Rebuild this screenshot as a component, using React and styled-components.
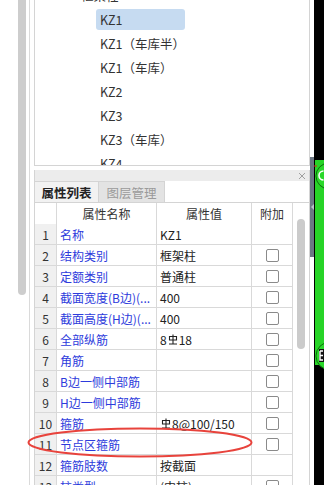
import React from "react";
import styled, { createGlobalStyle } from "styled-components";

const Global = createGlobalStyle`
  html, body { margin: 0; padding: 0; background: #fff; }
  body { font-family: "Noto Sans CJK SC", "Noto Sans", sans-serif; font-size: 12px; color: #333; }
  * { box-sizing: border-box; }
`;

const Page = styled.div`
  position: relative;
  display: flex;
  width: 324px;
  height: 485px;
  overflow: hidden;
  background: #fff;
`;

const LeftTrack = styled.div`
  width: 26px;
  flex: none;
  padding-left: 18px;
`;

const LeftThumb = styled.div`
  width: 8px;
  height: 295px;
  background: #cdcdcd;
  border-radius: 0 0 4px 4px;
`;

const Main = styled.div`
  width: 284px;
  flex: none;
  padding-left: 3px;
  display: flex;
`;

const Frame = styled.div`
  flex: 1;
  border-left: 1px solid #dadada;
  padding-left: 4px;
  display: flex;
  flex-direction: column;
`;

const TreePanel = styled.div`
  height: 166px;
  flex: none;
  border: 1px solid #d4d4d4;
  border-top: none;
  overflow: hidden;
`;

const TreeList = styled.div`
  margin-top: -17px;
  display: flex;
  flex-direction: column;
`;

const TreeRow = styled.div`
  height: 24px;
  display: flex;
  align-items: center;
  padding-left: ${(p) => p.$indent}px;
`;

const TreeLabel = styled.span`
  display: inline-flex;
  align-items: center;
  height: 21px;
  width: ${(p) => (p.$selected ? "89px" : "auto")};
  padding-left: 4px;
  border-radius: 3px;
  background: ${(p) => (p.$selected ? "#c6dbf1" : "transparent")};
  color: #333;
  white-space: nowrap;
  font-size: 12.5px;
`;

const PropPanel = styled.div`
  margin-top: 4px;
  flex: 1;
  border-left: 1px solid #d4d4d4;
  border-right: 1px solid #d4d4d4;
  display: flex;
  flex-direction: column;
`;

const TitleBar = styled.div`
  height: 11px;
  background: #ececec;
  display: flex;
  justify-content: flex-end;
  align-items: center;
  padding-right: 3px;
`;

const TabBar = styled.div`
  height: 22px;
  display: flex;
  border-bottom: 1px solid #d4d4d4;
`;

const Tab = styled.div`
  width: ${(p) => p.$w}px;
  display: flex;
  align-items: center;
  justify-content: center;
  border-top: 1px solid #d4d4d4;
  border-right: 1px solid #d4d4d4;
  background: ${(p) => (p.$active ? "#f2f2f2" : "#e3e3e3")};
  color: ${(p) => (p.$active ? "#222" : "#9a9a9a")};
  font-weight: ${(p) => (p.$active ? 700 : 400)};
  font-size: 12.5px;
`;

const TableArea = styled.div`
  display: flex;
  flex: 1;
`;

const Grid = styled.div`
  width: 258px;
  flex: none;
  display: grid;
  grid-template-columns: 22px 100px 95px 41px;
  grid-auto-rows: 21px;
  align-content: start;
`;

const Cell = styled.div`
  border-right: 1px solid #d9d9d9;
  border-bottom: 1px solid #d9d9d9;
  display: flex;
  align-items: center;
  justify-content: ${(p) => p.$align || "flex-start"};
  padding-left: ${(p) => p.$pad || 0}px;
  background: ${(p) => p.$bg || "#fff"};
  color: ${(p) => p.$color || "#222"};
  white-space: nowrap;
  overflow: hidden;
  font-size: 12px;
`;

const HeadCell = styled(Cell)`
  height: 22px;
  color: #333;
`;

const CheckBox = styled.span`
  width: 13px;
  height: 13px;
  border: 1px solid #8a8a8a;
  border-radius: 2px;
  background: #fff;
`;

const ScrollCol = styled.div`
  flex: 1;
  padding-left: 4px;
`;

const ScrollThumb = styled.div`
  margin-top: 16px;
  width: 8px;
  height: 130px;
  border-radius: 4px;
  background: #cbcbcb;
`;

const RightEdge = styled.div`
  width: 14px;
  flex: none;
  display: flex;
`;

const Splitter = styled.div`
  width: 4px;
  display: flex;
  flex-direction: column;
`;

const SplitterBar = styled.div`
  margin-top: 157px;
  height: 100px;
  background: #6c7784;
  display: flex;
  align-items: center;
  justify-content: center;
`;

const Canvas = styled.div`
  width: 10px;
  background: #000;
`;

const Annotation = styled.svg`
  position: absolute;
  left: 26px;
  top: 426px;
  pointer-events: none;
`;

const Rebar = () => (
  <svg width="10" height="11" viewBox="0 0 10 11" style={{ margin: "0 1px" }}>
    <path d="M1.5 2.5h7v3.5h-7z M5 0.5v9.5 M1 10h8" fill="none" stroke="#222" strokeWidth="1.1" />
  </svg>
);

const treeItems = [
  { t: "框架柱", indent: 42, sel: false },
  { t: "KZ1", indent: 61, sel: true },
  { t: "KZ1（车库半）", indent: 61 },
  { t: "KZ1（车库）", indent: 61 },
  { t: "KZ2", indent: 61 },
  { t: "KZ3", indent: 61 },
  { t: "KZ3（车库）", indent: 61 },
  { t: "KZ4", indent: 61 },
];

const rows = [
  { n: 1, name: "名称", value: "KZ1", check: false },
  { n: 2, name: "结构类别", value: "框架柱", check: true },
  { n: 3, name: "定额类别", value: "普通柱", check: true },
  { n: 4, name: "截面宽度(B边)(...", value: "400", check: true },
  { n: 5, name: "截面高度(H边)(...", value: "400", check: true },
  { n: 6, name: "全部纵筋", value: <>8<Rebar />18</>, check: true },
  { n: 7, name: "角筋", value: "", check: true },
  { n: 8, name: "B边一侧中部筋", value: "", check: true },
  { n: 9, name: "H边一侧中部筋", value: "", check: true },
  { n: 10, name: "箍筋", value: <><Rebar />8@100/150</>, check: true },
  { n: 11, name: "节点区箍筋", value: "", check: true },
  { n: 12, name: "箍筋肢数", value: "按截面", check: false },
  { n: 13, name: "柱类型", value: "(中柱)", check: true },
];

export default function App() {
  return (
    <>
      <Global />
      <Page>
        <LeftTrack>
          <LeftThumb />
        </LeftTrack>
        <Main>
          <Frame>
            <TreePanel>
              <TreeList>
                {treeItems.map((it, i) => (
                  <TreeRow key={i} $indent={it.indent}>
                    <TreeLabel $selected={it.sel}>{it.t}</TreeLabel>
                  </TreeRow>
                ))}
              </TreeList>
            </TreePanel>
            <PropPanel>
              <TitleBar>
                <svg width="8" height="8" viewBox="0 0 8 8">
                  <path d="M1 1L7 7M7 1L1 7" stroke="#a0a0a0" strokeWidth="1" />
                </svg>
              </TitleBar>
              <TabBar>
                <Tab $w={64} $active>属性列表</Tab>
                <Tab $w={66}>图层管理</Tab>
              </TabBar>
              <TableArea>
                <Grid>
                  <HeadCell />
                  <HeadCell $align="center">属性名称</HeadCell>
                  <HeadCell $align="center">属性值</HeadCell>
                  <HeadCell $align="center">附加</HeadCell>
                  {rows.map((r) => (
                    <React.Fragment key={r.n}>
                      <Cell $align="center" $bg="#f0f0f0" $color="#333">{r.n}</Cell>
                      <Cell $pad={3} $color="#2d3bdc">{r.name}</Cell>
                      <Cell $pad={3}>{r.value}</Cell>
                      <Cell $align="center">{r.check && <CheckBox />}</Cell>
                    </React.Fragment>
                  ))}
                </Grid>
                <ScrollCol>
                  <ScrollThumb />
                </ScrollCol>
              </TableArea>
            </PropPanel>
          </Frame>
        </Main>
        <RightEdge>
          <Splitter>
            <SplitterBar>
              <svg width="3" height="6" viewBox="0 0 3 6">
                <path d="M3 0L0 3L3 6z" fill="#b8c0c8" />
              </svg>
            </SplitterBar>
          </Splitter>
          <Canvas>
            <svg width="10" height="485" viewBox="0 0 10 485">
              <rect x="1" y="160" width="9" height="205" fill="#27d427" />
              <circle cx="15" cy="176" r="13" fill="#2ad82a" stroke="#0c6e0c" strokeWidth="1" />
              <path d="M0 166H3" stroke="#e02020" strokeWidth="1" />
              <path d="M9.5 171a4 4 0 0 0 0 9" fill="none" stroke="#fff" strokeWidth="1.6" />
              <circle cx="16" cy="356" r="14" fill="#2ad82a" stroke="#0c6e0c" strokeWidth="1" />
              <rect x="5" y="349" width="5" height="13" fill="#111" />
              <path d="M6 351v9h3M6 351h3M6 355.5h3" fill="none" stroke="#fff" strokeWidth="1.4" />
            </svg>
          </Canvas>
        </RightEdge>
        <Annotation width="232" height="34" viewBox="0 0 232 34">
          <ellipse cx="114" cy="16.5" rx="111.5" ry="14" fill="none" stroke="#e8433c" strokeWidth="2" />
        </Annotation>
      </Page>
    </>
  );
}
